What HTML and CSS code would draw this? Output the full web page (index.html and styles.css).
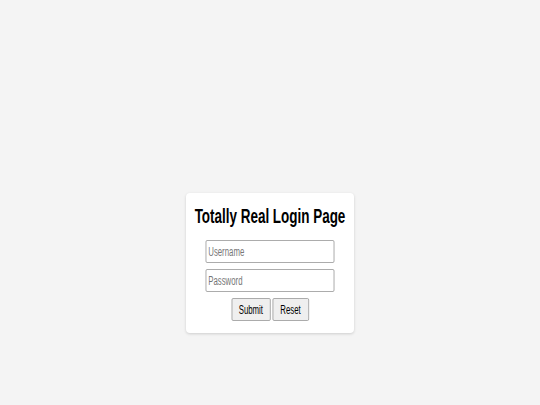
FILE: index.html
```html
<!DOCTYPE html>
<html>
<head>
<meta charset="utf-8">
<link rel="stylesheet" href="styles.css">
</head>
<body>
<div class="page">
  <div class="card">
    <form class="card-inner">
      <h1 class="title">Totally Real Login Page</h1>
      <input class="field" type="text" placeholder="Username">
      <input class="field" type="password" placeholder="Password">
      <div class="actions">
        <button type="button" class="btn btn-submit">Submit</button>
        <button type="button" class="btn btn-reset">Reset</button>
      </div>
    </form>
  </div>
</div>
</body>
</html>
```
FILE: styles.css
```css
html, body {
  margin: 0;
  padding: 0;
  background: #f4f4f4;
  font-family: "Liberation Sans", Arial, sans-serif;
}
.page {
  width: 540px;
  height: 405px;
  display: flex;
  justify-content: center;
  padding-top: 193px;
  box-sizing: border-box;
}
.card {
  width: 168px;
  height: 140px;
  background: #fff;
  border-radius: 4px;
  box-shadow: 0 1px 3px rgba(0,0,0,0.16);
  display: flex;
  justify-content: center;
}
.card-inner {
  flex: none;
  width: 258px;
  height: 140px;
  box-sizing: border-box;
  margin: 0;
  transform: scaleX(0.65);
  transform-origin: center top;
  display: flex;
  flex-direction: column;
  align-items: center;
  padding-top: 11px;
}
.title {
  margin: 0 0 13px 0;
  font-size: 20.7px;
  line-height: 23px;
  font-weight: bold;
  color: #000;
  white-space: nowrap;
}
.field {
  width: 198px;
  height: 23px;
  box-sizing: border-box;
  border: 1px solid #9a9a9a;
  border-radius: 2px;
  padding: 0 3px;
  margin: 0 0 6px 0;
  font-family: inherit;
  font-size: 12px;
  background: #fff;
  outline: none;
}
.field::placeholder { color: #767676; }
.actions {
  display: flex;
  gap: 3px;
}
.btn {
  height: 23px;
  box-sizing: border-box;
  border: 1px solid #9a9a9a;
  border-radius: 2px;
  background: #efefef;
  font-family: inherit;
  font-size: 12px;
  color: #000;
  padding: 0;
}
.btn-submit { width: 60px; }
.btn-reset { width: 56px; }
```
